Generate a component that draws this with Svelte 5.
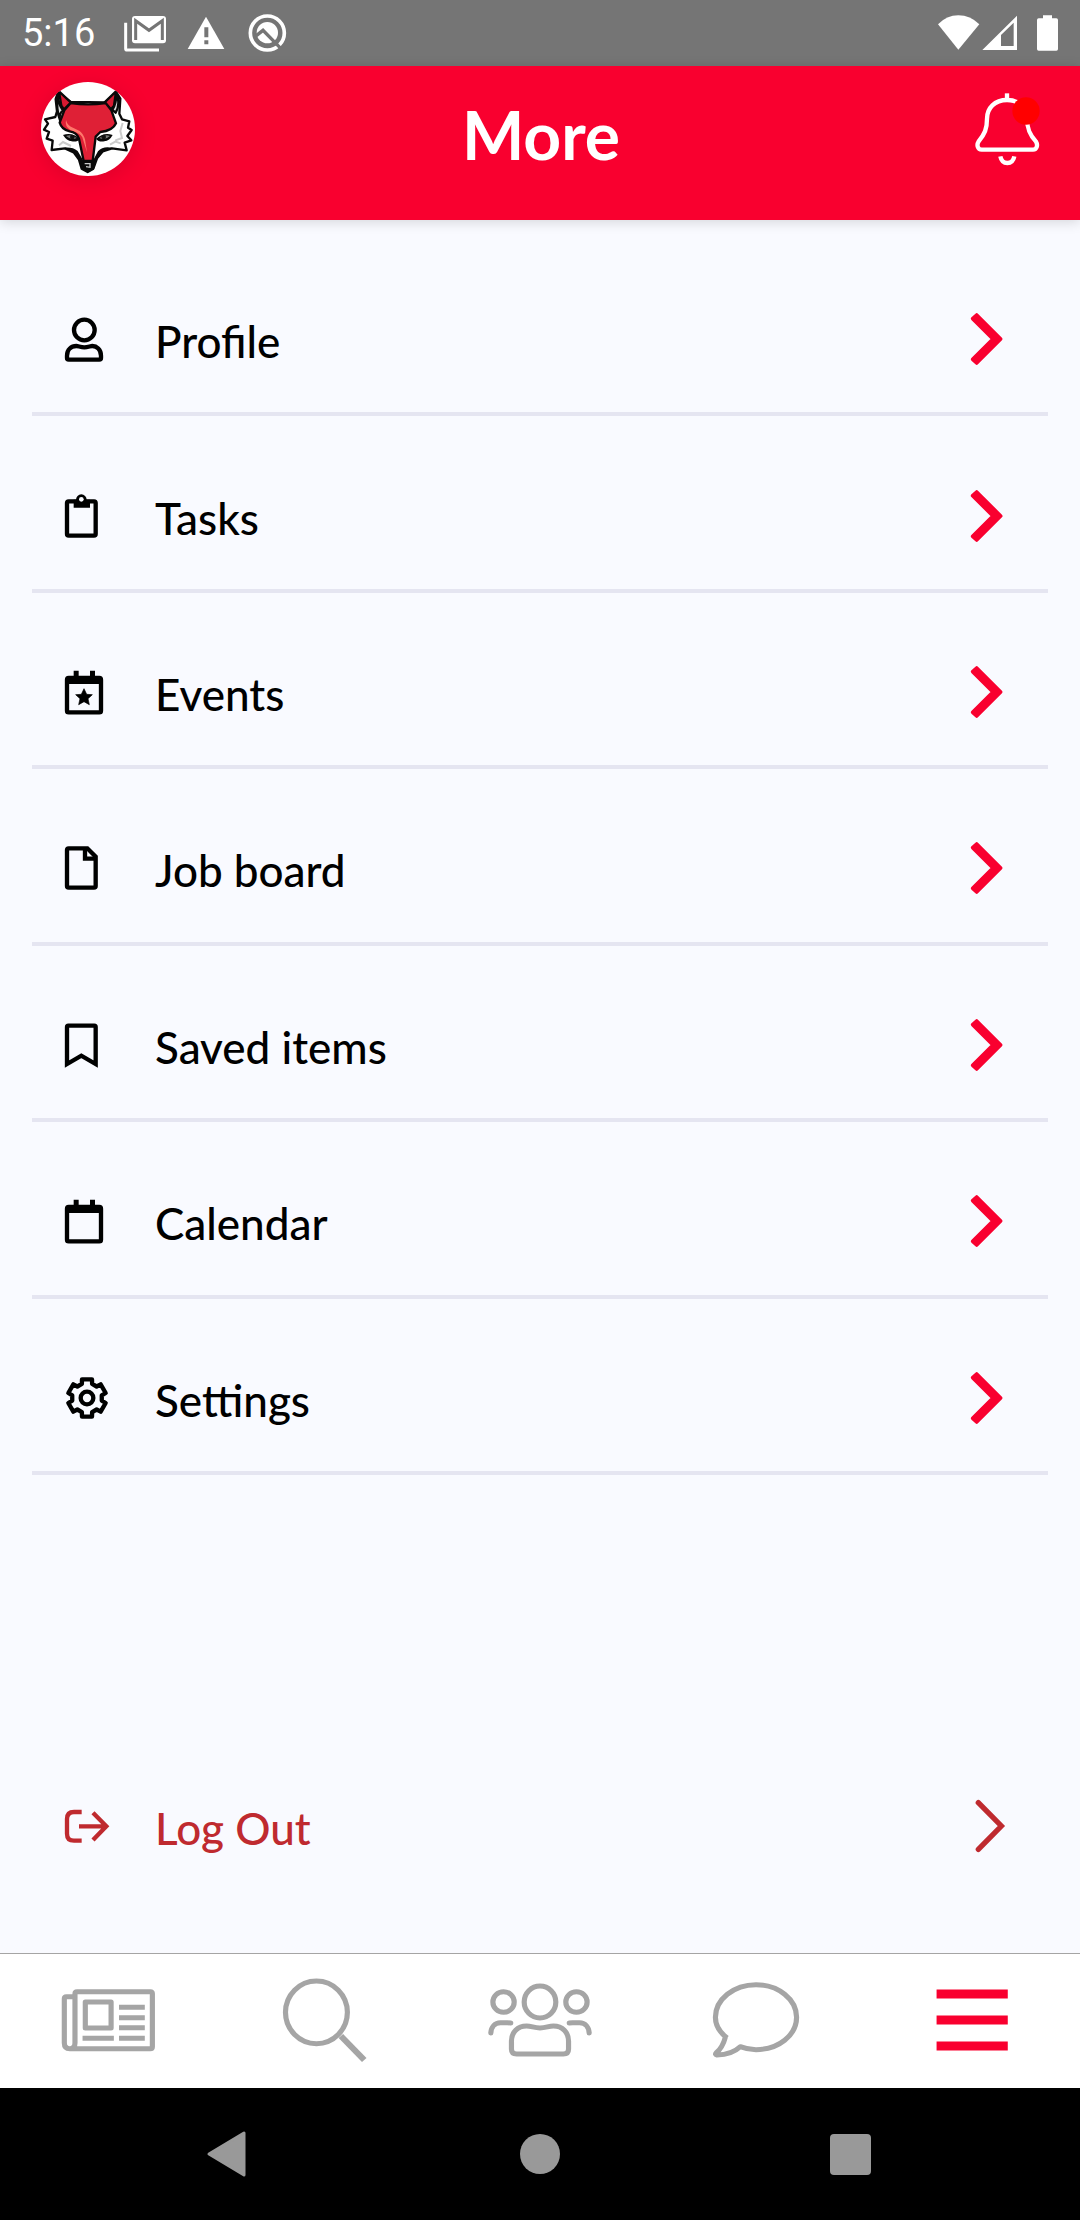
<script lang="ts">
  interface MenuItem {
    icon: string;
    label: string;
  }

  const items: MenuItem[] = [
    { icon: 'profile', label: 'Profile' },
    { icon: 'tasks', label: 'Tasks' },
    { icon: 'events', label: 'Events' },
    { icon: 'jobs', label: 'Job board' },
    { icon: 'saved', label: 'Saved items' },
    { icon: 'calendar', label: 'Calendar' },
    { icon: 'settings', label: 'Settings' },
  ];

  const tabs = ['News', 'Search', 'People', 'Messages', 'More'];
  let activeTab = $state('More');

  function polar(r: number, deg: number) {
    const a = (deg * Math.PI) / 180;
    return `${(69 + r * Math.cos(a)).toFixed(1)},${(72 + r * Math.sin(a)).toFixed(1)}`;
  }

  // six teeth, first one pointing up
  const gear = [0, 1, 2, 3, 4, 5]
    .map((i) => -90 + i * 60)
    .map((a) => [polar(45, a - 20), polar(58, a - 15), polar(58, a + 15), polar(45, a + 20)].join(' '))
    .join(' ');
</script>

{#snippet menuIcon(name: string)}
  <svg class="icon" viewBox="0 0 144 144" aria-hidden="true">
    {#if name === 'profile'}
      <circle cx="61" cy="45" r="31" />
      <path d="M14 134Q9 134 9 129V122C9 103 22 93 37 93C43 93 50 97 61 97C72 97 79 93 85 93C98 93 111 103 111 122V129Q111 134 106 134Z" />
    {:else if name === 'tasks'}
      <rect x="9" y="28" width="86" height="103" rx="5" />
      <path class="solid" d="M29 23H36A16 16 0 1 1 68 23H78V47H29Z" />
      <circle class="hole" cx="52" cy="22" r="7" />
    {:else if name === 'events' || name === 'calendar'}
      <rect x="9" y="30" width="102" height="103" rx="5" />
      <path class="solid" d="M6 28H29V8H44V26H78V8H93V28H114V48H6Z" />
      {#if name === 'events'}
        <path class="solid round" d="M60 62L68 79L85 80L72 92L76 110L60 101L44 110L48 92L35 80L52 79Z" />
      {/if}
    {:else if name === 'jobs'}
      <path d="M14 13H70L95 38V126Q95 131 90 131H14Q9 131 9 126V18Q9 13 14 13Z" />
      <path d="M63 13V44H95" />
    {:else if name === 'saved'}
      <path d="M9 129V18Q9 14 13 14H91Q95 14 95 18V129L52 104Z" />
    {:else if name === 'settings'}
      <polygon points={gear} stroke-linejoin="round" />
      <circle cx="69" cy="72" r="19" />
    {:else if name === 'logout'}
      <path d="M53 30H30Q9 30 9 51V95Q9 116 30 116H53" />
      <path d="M45 73H124M87 32L127 73L87 114" />
    {/if}
  </svg>
{/snippet}

<div class="screen">
  <div class="status-bar">
    <span class="time">5:16</span>
    <div class="notifications">
      <svg width="44" height="48" viewBox="372 27 132 144" aria-hidden="true">
        <path d="M380 68V146Q380 150 385 150H480" fill="none" stroke="#fff" stroke-width="9" />
        <rect x="399" y="48" width="102" height="82" rx="9" fill="#fff" />
        <path d="M410 120V62L450 91L490 62V120" fill="none" stroke="#757575" stroke-width="9" />
      </svg>
      <svg width="40" height="48" viewBox="564 27 120 144" aria-hidden="true">
        <path d="M621 50L676 147H566Z" fill="#fff" />
        <path d="M616 82H628V112H616ZM616 121H628V133H616Z" fill="#757575" />
      </svg>
      <svg width="40" height="48" viewBox="744 27 120 144" aria-hidden="true">
        <circle cx="805" cy="99" r="51" fill="none" stroke="#fff" stroke-width="11" />
        <circle cx="805" cy="98" r="32" fill="#fff" />
        <path d="M772 107L792 91L846 146" fill="none" stroke="#757575" stroke-width="10" />
      </svg>
    </div>
    <div class="signals">
      <svg width="43" height="48" viewBox="111 27 129 144" aria-hidden="true">
        <path d="M114 73Q140 46 175 46Q211 46 238 73L175 149Z" fill="#fff" />
      </svg>
      <svg width="36" height="48" viewBox="246 27 108 144" aria-hidden="true">
        <path fill-rule="evenodd" d="M247 150L351 47V150ZM303 105V138H341V68Z" fill="#fff" />
      </svg>
      <svg class="battery" width="23" height="48" viewBox="408 27 69 144" aria-hidden="true">
        <path d="M429 46H456V55H469Q474 55 474 60V147Q474 152 469 152H416Q411 152 411 147V60Q411 55 416 55H429Z" fill="#fff" />
      </svg>
    </div>
  </div>

  <header>
    <button class="avatar" aria-label="Account">
      <svg viewBox="33 37 282 282" aria-hidden="true">
        <rect x="33" y="37" width="282" height="282" fill="#fff" />
        <g stroke="#090909" stroke-width="7" stroke-linejoin="round">
          <path fill="#fff" d="M84 67L77 88L81 125L76 142L45 149L54 162L42 180L57 187L50 207L68 213L65 241L105 236L131 248L147 270L155 297L173 307L190 297L201 266L218 245L246 236L290 242L284 219L304 212L292 199L305 181L294 174L298 155L276 149L268 132L271 87L258 67L227 98L122 97Z" />
          <path fill="#d71931" d="M87 65L123 99L102 119L94 108Z" />
          <path fill="#d71931" d="M258 65L223 99L243 119L252 108Z" />
          <path fill="#ddd" d="M84 69Q82 99 99 123Q86 130 90 151Q77 119 84 69Z" />
          <path fill="#ddd" d="M260 69Q272 104 257 129L247 121Q259 102 260 69Z" />
          <path fill="#df2036" d="M122 100Q174 108 227 100L244 122L258 161Q248 184 211 187L197 201L188 274H161L147 207Q140 187 119 185Q95 180 89 159L103 122Z" />
        </g>
        <path d="M108 151Q112 168 129 174L149 184Q159 191 165 209L171 248L157 203Q149 189 121 181Q104 170 108 151Z" fill="#ff786b" />
        <g fill="#090909">
          <path d="M99 196Q125 186 150 207Q142 218 125 215Q110 213 99 196Z" />
          <path d="M248 196Q222 186 198 207Q206 218 223 215Q239 213 248 196Z" />
          <path d="M105 234Q128 232 143 244L161 275H188L204 245Q219 228 246 234L221 246L201 268L192 298Q174 314 155 298L147 270L131 248Z" />
        </g>
        <path d="M108 199Q125 193 140 205Q124 213 108 199ZM240 199Q223 193 208 205Q225 213 240 199Z" fill="#777" />
        <g fill="none" stroke="#ccc" stroke-width="6">
          <path d="M87 227L99 217L123 229M256 212L276 205L271 184L278 160M240 225L256 216L272 221" />
          <path d="M164 282L180 282V293L168 291" stroke-width="4" />
        </g>
        <g fill="#111">
          <circle cx="127" cy="202" r="7" />
          <circle cx="221" cy="202" r="7" />
        </g>
      </svg>
    </button>
    <h1>More</h1>
    <button class="bell" aria-label="Notifications">
      <svg width="68" height="76" viewBox="220 272 204 228" aria-hidden="true">
        <g fill="none" stroke="#fff" stroke-width="13">
          <path d="M322 299C285 299 262 323 262 355C262 386 255 401 237 423C230 434 234 448 246 448H400C412 448 415 434 409 424C390 403 382 385 382 355C382 323 359 299 322 299Z" />
          <path d="M322 300V279" />
          <path d="M302 468Q306 488 323 488Q340 488 344 468" />
        </g>
        <circle cx="379" cy="332" r="41" fill="#f00" />
      </svg>
    </button>
  </header>

  <main>
    <ul class="menu">
      {#each items as item}
        <li>
          <button class="row">
            {@render menuIcon(item.icon)}
            <span class="label">{item.label}</span>
            <svg class="chevron" viewBox="0 0 108 162" aria-hidden="true">
              <path d="M8 20L20 9L92 81L20 153L8 142L69 81Z" />
            </svg>
          </button>
        </li>
      {/each}
    </ul>

    <button class="row logout">
      {@render menuIcon('logout')}
      <span class="label">Log Out</span>
      <svg class="chevron thin" viewBox="0 0 108 162" aria-hidden="true">
        <path d="M25 11L94 81L25 151" />
      </svg>
    </button>
  </main>

  <nav class="tabs">
    {#each tabs as tab}
      <button class:active={activeTab === tab} aria-label={tab} onclick={() => (activeTab = tab)}>
        <svg viewBox="0 4 314 279" preserveAspectRatio="none" aria-hidden="true">
          {#if tab === 'News'}
            <path d="M61 69H36Q30 69 30 75V208Q30 225 46 225H280Q286 225 286 219V60Q286 54 280 54H67Q61 54 61 60V208Q61 225 46 225" />
            <rect x="91" y="85" width="75" height="78" />
            <path d="M189 101H264M189 132H264M189 162H264M83 194H174M189 194H264" />
          {:else if tab === 'Search'}
            <ellipse cx="135" cy="116" rx="90" ry="94" />
            <path d="M206 187L274 259" stroke-width="18" />
          {:else if tab === 'People'}
            <circle cx="51" cy="85" r="31" />
            <circle cx="263" cy="85" r="31" />
            <ellipse cx="157" cy="85" rx="46" ry="48" />
            <path stroke-linecap="round" d="M14 178C15 160 26 147 42 147H62L72 148M300 178C299 160 288 147 272 147H252L242 148" />
            <path d="M89 241Q74 241 74 226V203C74 175 92 157 118 157C132 157 140 163 157 163C174 163 182 157 196 157C222 157 240 175 240 203V226Q240 241 225 241Z" />
          {:else if tab === 'Messages'}
            <path d="M73 193C50 175 39 153 39 131C39 77 92 33 157 33C222 33 275 77 275 131C275 185 222 228 157 228Q133 228 111 219C95 235 70 243 43 244Q37 243 41 238Q60 222 68 190" />
          {:else}
            <path class="bars" d="M54 61H261M54 139H261M54 217H261" />
          {/if}
        </svg>
      </button>
    {/each}
  </nav>

  <div class="system-nav">
    <button aria-label="Back">
      <svg width="48" height="48" viewBox="0 0 48 48" aria-hidden="true">
        <path d="M5 24L40 3V45Z" stroke="#999" stroke-width="3" stroke-linejoin="round" />
      </svg>
    </button>
    <button aria-label="Home">
      <svg width="48" height="48" viewBox="0 0 48 48" aria-hidden="true">
        <circle cx="24" cy="24" r="20" />
      </svg>
    </button>
    <button aria-label="Recent apps">
      <svg width="48" height="48" viewBox="0 0 48 48" aria-hidden="true">
        <rect x="2" y="4" width="41" height="41" rx="4" />
      </svg>
    </button>
  </div>
</div>

<style>
  :global(body) {
    margin: 0;
    background: #f9faff;
  }

  .screen {
    display: flex;
    flex-direction: column;
    min-height: 100vh;
    font-family: Lato, 'Open Sans', sans-serif;
    color: #000;
  }

  button {
    padding: 0;
    border: 0;
    background: none;
    font: inherit;
    color: inherit;
    cursor: pointer;
  }

  svg {
    display: block;
  }

  .status-bar {
    display: flex;
    align-items: center;
    height: 66px;
    padding: 0 21px 0 22px;
    background: #757575;
    color: #fff;
  }

  .time {
    font-family: Roboto, sans-serif;
    font-size: 38px;
    line-height: 44px;
  }

  .notifications {
    display: flex;
    gap: 20px;
    margin-left: 28px;
  }

  .signals {
    display: flex;
    gap: 2px;
    margin-left: auto;
  }

  .battery {
    margin-left: 16px;
  }

  header {
    position: relative;
    display: grid;
    grid-template-columns: 1fr auto 1fr;
    align-items: start;
    padding: 16px 39px 34px 41px;
    background: #f9002f;
    color: #fff;
    box-shadow: 0 2px 12px rgba(0, 0, 0, 0.15);
  }

  .avatar {
    width: 94px;
    height: 94px;
    border-radius: 50%;
    overflow: hidden;
    box-shadow: 0 4px 24px rgba(0, 0, 0, 0.12);
  }

  h1 {
    margin: 0;
    font-size: 66px;
    font-weight: 700;
    line-height: 106px;
    height: 104px;
  }

  .bell {
    display: flex;
    align-items: center;
    justify-self: end;
    height: 94px;
  }

  main {
    display: flex;
    flex: 1;
    flex-direction: column;
    padding: 20px 32px 54px;
  }

  .menu {
    display: grid;
    grid-auto-rows: 1fr;
    min-height: 1235px;
    margin: 0;
    padding: 0;
    list-style: none;
  }

  .menu li {
    display: flex;
    border-bottom: 4px solid #e5e5f1;
  }

  .row {
    display: flex;
    align-items: center;
    gap: 43px;
    width: 100%;
    min-height: 172px;
    padding: 26px 42px 0 32px;
    text-align: left;
  }

  .label {
    flex: 1;
    padding-top: 4px;
    font-size: 44px;
    font-weight: 500;
    line-height: 52px;
  }

  .icon {
    width: 48px;
    height: 48px;
    fill: none;
    stroke: currentColor;
    stroke-width: 13;
  }

  .icon .solid {
    fill: currentColor;
    stroke: none;
  }

  .icon .round {
    stroke: currentColor;
    stroke-width: 2;
    stroke-linejoin: round;
  }

  .icon .hole {
    fill: #f9faff;
    stroke: none;
  }

  .chevron {
    width: 36px;
    height: 54px;
    fill: #f9002f;
    stroke: #f9002f;
    stroke-width: 11;
    stroke-linecap: round;
    stroke-linejoin: round;
  }

  .chevron.thin {
    fill: none;
    stroke: currentColor;
    stroke-width: 16;
    stroke-linejoin: miter;
  }

  .logout {
    margin-top: auto;
    color: #bf2a2f;
  }

  .tabs {
    display: grid;
    grid-template-columns: repeat(5, 1fr);
    border-top: 1px solid #a5a5a5;
    background: #fff;
  }

  .tabs button {
    display: flex;
    align-items: center;
    justify-content: center;
    height: 134px;
    color: #a5a5a5;
  }

  .tabs button.active {
    color: #f9002f;
  }

  .tabs svg {
    width: 108px;
    height: 93px;
    fill: none;
    stroke: currentColor;
    stroke-width: 15;
    stroke-linejoin: round;
  }

  .tabs .bars {
    stroke-width: 27;
  }

  .system-nav {
    display: grid;
    grid-template-columns: repeat(3, 1fr);
    padding: 0 72px;
    background: #000;
  }

  .system-nav button {
    display: flex;
    align-items: center;
    justify-content: center;
    height: 132px;
  }

  .system-nav svg {
    fill: #999;
  }
</style>
